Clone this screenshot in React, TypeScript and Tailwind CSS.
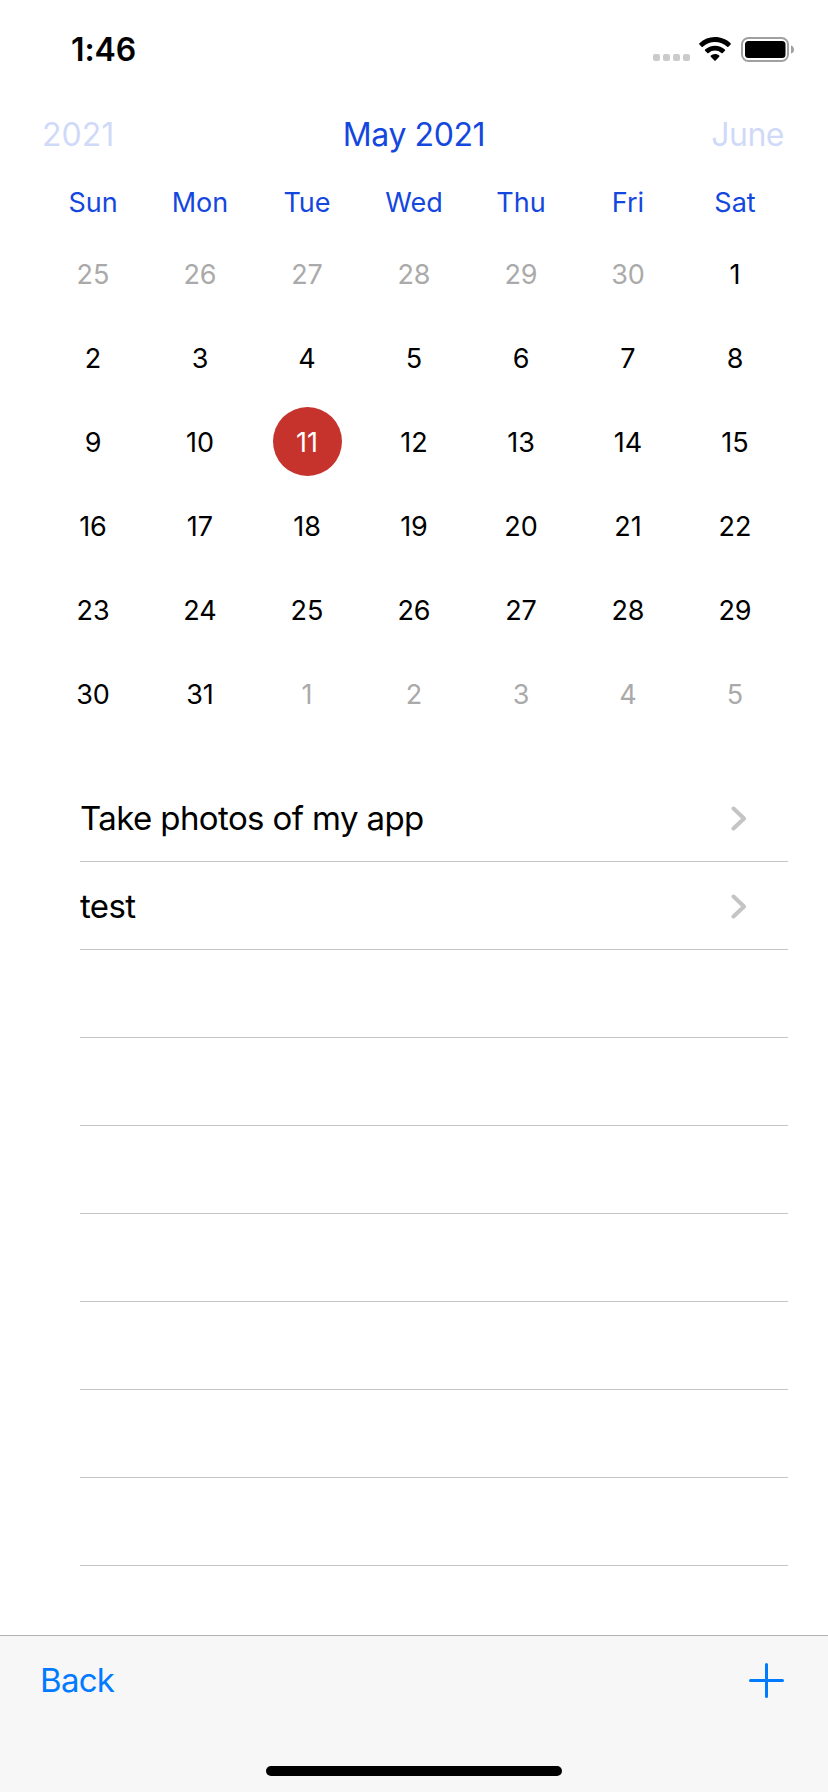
const weekdays = ["Sun", "Mon", "Tue", "Wed", "Thu", "Fri", "Sat"];

// Six full weeks covering May 2021, starting on Sunday 25 April.
const days = Array.from({ length: 42 }, (_, i) => {
  const offset = i - 5;
  if (offset < 1) return { day: offset + 30, current: false };
  if (offset > 31) return { day: offset - 31, current: false };
  return { day: offset, current: true };
});

const selectedDay = 11;
const events = ["Take photos of my app", "test", "", "", "", "", "", "", ""];

function StatusBar() {
  return (
    <header className="flex h-[100px] shrink-0 items-start justify-between pl-[71px] pr-[34px] pt-[30px]">
      <time className="text-[32px] font-semibold leading-[40px] tracking-[-0.1px]">1:46</time>
      <div className="flex pt-[7px]">
        <div className="mt-[17px] flex gap-[3px]">
          {[0, 1, 2, 3].map((i) => (
            <span key={i} className="size-[7px] rounded-[2px] bg-[#cbcbcb]" />
          ))}
        </div>
        <svg className="ml-[9px]" width="32" height="25" viewBox="0 0 32 25">
          <path d="M16 0C22 0 27.5 2.3 31.6 6.2c.4.4.4.9 0 1.3l-2.2 2.2c-.3.3-.8.3-1.2 0A18 18 0 0 0 3.8 9.7c-.4.3-.9.3-1.2 0L.4 7.5c-.4-.4-.4-.9 0-1.3A22.7 22.7 0 0 1 16 0Z" />
          <path d="M16 8.7c3.7 0 7.2 1.4 9.9 3.8.4.4.4.9 0 1.3l-2.2 2.2c-.4.4-.9.4-1.3 0a9.6 9.6 0 0 0-12.8 0c-.4.4-.9.4-1.3 0l-2.2-2.2c-.4-.4-.4-.9 0-1.3A14.8 14.8 0 0 1 16 8.7Z" />
          <path d="M16 17c1.6 0 3 .5 4.2 1.5.4.3.4.8 0 1.2l-3.6 3.7c-.4.4-.8.4-1.2 0l-3.6-3.7c-.4-.4-.4-.9 0-1.2A6.5 6.5 0 0 1 16 17Z" />
        </svg>
        <svg className="ml-[10px]" width="53" height="25" viewBox="0 0 53 25">
          <rect x="1" y="1" width="46" height="23" rx="6.5" fill="none" stroke="#a0a0a0" strokeWidth="2" />
          <rect x="4" y="4" width="40.5" height="17" rx="3.5" />
          <path d="M50 8.2c1.8.7 3 2.3 3 4.3s-1.2 3.6-3 4.3Z" fill="#a0a0a0" />
        </svg>
      </div>
    </header>
  );
}

function Calendar() {
  return (
    <section className="shrink-0">
      <div className="grid h-[70px] grid-cols-3 items-center px-[42px] text-[32px] text-[#1447de]">
        <span className="text-left opacity-20">2021</span>
        <h1 className="text-center tracking-[-0.4px]">May 2021</h1>
        <span className="pr-[2px] text-right tracking-[-0.5px] opacity-20">June</span>
      </div>
      <div className="mx-auto grid w-[749px] grid-cols-7">
        {weekdays.map((name) => (
          <div key={name} className="flex h-[62px] items-center justify-center pt-[5px] text-[27px] text-[#1447de]">
            {name}
          </div>
        ))}
        {days.map(({ day, current }, i) => {
          const selected = current && day === selectedDay;
          return (
            <div key={i} className="flex h-[84px] items-center justify-center text-[27px]">
              <span
                className={
                  selected
                    ? "-mt-px flex size-[69px] items-center justify-center rounded-full bg-[#c5332c] pt-[3px] text-white"
                    : current
                      ? "pt-[2px] text-black"
                      : "pt-[2px] text-[#aaaaaa]"
                }
              >
                {day}
              </span>
            </div>
          );
        })}
      </div>
    </section>
  );
}

function EventList() {
  return (
    <ul className="ml-[80px] mr-[40px] mt-[38px] grow">
      {events.map((title, i) => (
        <li key={i} className="flex h-[88px] items-center justify-between border-b border-[#c6c6c8] pr-[41px]">
          <span className="pt-[2px] text-[33px] tracking-[-0.6px]">{title}</span>
          {title && (
            <svg className="mt-px" width="16" height="25" viewBox="0 0 16 25" fill="none">
              <path d="M2.5 2.5 13 12.5 2.5 22.5" stroke="#c4c4c6" strokeWidth="4" strokeLinecap="round" strokeLinejoin="round" />
            </svg>
          )}
        </li>
      ))}
    </ul>
  );
}

function Toolbar() {
  return (
    <footer className="flex h-[157px] shrink-0 flex-col justify-between border-t border-[#b2b2b2] bg-[#f7f7f7] pb-[16px]">
      <div className="flex h-[90px] items-center justify-between pl-[40px] pr-[44px]">
        <button className="text-[33px] tracking-[-0.7px] text-[#007aff]">Back</button>
        <button aria-label="Add">
          <svg className="mb-[2px] block" width="35" height="35" viewBox="0 0 35 35">
            <path d="M17.5 1.5v32M1.5 17.5h32" stroke="#007aff" strokeWidth="3" strokeLinecap="round" />
          </svg>
        </button>
      </div>
      <div className="mx-auto h-[10px] w-[296px] rounded-full bg-black" />
    </footer>
  );
}

export default function App() {
  return (
    <main className="flex h-[1792px] w-[828px] flex-col overflow-hidden bg-white font-['Inter',sans-serif] text-black">
      <StatusBar />
      <Calendar />
      <EventList />
      <Toolbar />
    </main>
  );
}
